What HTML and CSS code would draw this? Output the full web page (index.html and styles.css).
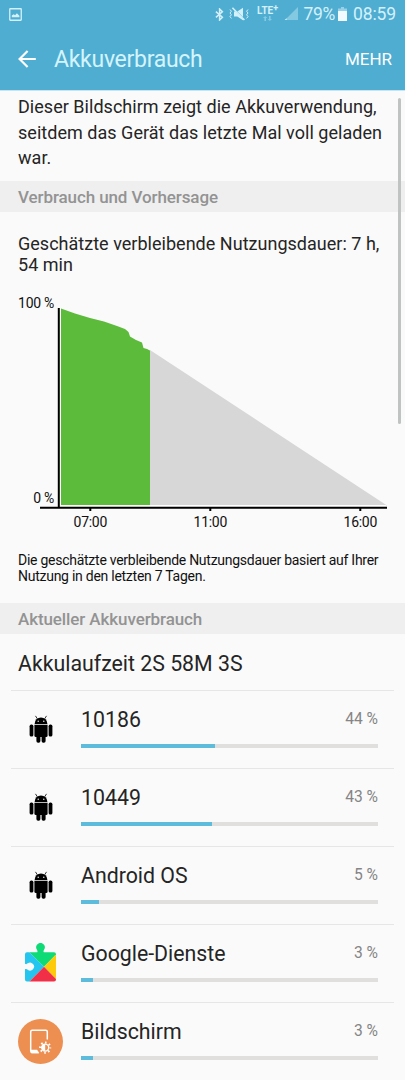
FILE: index.html
```html
<!DOCTYPE html>
<html lang="de">
<head>
  <meta charset="UTF-8" />
  <meta name="viewport" content="width=device-width, initial-scale=1.0"/>
  <title>Akkuverbrauch</title>
  <link rel="stylesheet" href="styles.css">
</head>
<body>
  <svg class="defs" width="0" height="0">
    <symbol id="android" viewBox="0 0 24 28">
      <path d="M5.6 8.9a6.4 6.4 0 0 1 12.8 0z"/>
      <path d="M8.2 3.6 6.7 1.2M15.8 3.6l1.5-2.4" stroke="#000" stroke-width=".8" stroke-linecap="round"/>
      <circle cx="9.2" cy="6.2" r=".7" fill="#fafafa"/>
      <circle cx="14.8" cy="6.2" r=".7" fill="#fafafa"/>
      <path d="M5.4 9.8h13.2v10.7a1.5 1.5 0 0 1-1.5 1.5H6.9a1.5 1.5 0 0 1-1.5-1.5z"/>
      <rect x=".6" y="9.6" width="3.8" height="12" rx="1.7"/>
      <rect x="19.6" y="9.6" width="3.8" height="12" rx="1.7"/>
      <rect x="7.4" y="19" width="4" height="8.8" rx="1.7"/>
      <rect x="12.6" y="19" width="4" height="8.8" rx="1.7"/>
    </symbol>
  </svg>

  <header>
    <div class="statusbar">
      <svg class="picture" width="13" height="13" viewBox="0 0 13 13">
        <rect x=".75" y=".75" width="11.5" height="11.5" rx=".5" fill="none" stroke="#d4f1fb" stroke-width="1.3"/>
        <path d="M2.8 9.2V7.6l1.9-1.4 1.4 1 1.8-2 2.5 2.6v1.4z" fill="#d4f1fb"/>
      </svg>
      <svg width="9" height="13" viewBox="0 0 9 13" fill="none" stroke="#d4f1fb" stroke-width="1.5">
        <path d="M.9 3.6 7.4 9.3 4.6 12V1l2.8 2.7L.9 9.4"/>
      </svg>
      <svg class="mute" width="21" height="14" viewBox="0 0 21 14">
        <path d="M5 4.5h3.3L14 .8v12.4L8.3 9.5H5z" fill="#d4f1fb"/>
        <path d="M4.2 1.2l12 12" stroke="#4fadd1" stroke-width="1.4"/>
        <path d="M3.4 .8l12 12.2" stroke="#d4f1fb" stroke-width="1.6"/>
        <path d="M1 2.5l1.4 1.7L1 6l1.4 1.8L1 9.6l1.4 1.8M19 2.5l-1.4 1.7L19 6l-1.4 1.8L19 9.6l-1.4 1.8" fill="none" stroke="#d4f1fb" stroke-width="1"/>
      </svg>
      <div class="lte">
        <span>LTE<sup>+</sup></span>
        <svg width="9" height="5" viewBox="0 0 9 5" fill="#83cae4">
          <path d="M0 2 2.2 0l2.2 2H3v3H1.4V2zM4.6 3H6V0h1.6v3H9L6.8 5z"/>
        </svg>
      </div>
      <svg class="signal" width="15" height="14" viewBox="0 0 15 14">
        <path d="M14 0v13H1z" fill="#83c9e2"/>
        <path d="M2.6 11.2V13H.6z" fill="#d4f1fb"/>
      </svg>
      <span class="level">79%</span>
      <svg class="battery" width="9" height="14" viewBox="0 0 9 14">
        <path d="M3 0h3v1.5h3V14H0V1.5h3z" fill="#95d2e9"/>
        <path d="M0 4h9v10H0z" fill="#f1fbff"/>
      </svg>
      <span class="time">08:59</span>
    </div>
    <div class="appbar">
      <svg width="18" height="18" viewBox="0 0 18 18" fill="none" stroke="#fff" stroke-width="2.2">
        <path d="M17.8 9H1.8M9.6 1 1.6 9l8 8"/>
      </svg>
      <h1>Akkuverbrauch</h1>
      <button>MEHR</button>
    </div>
  </header>

  <main>
    <p class="intro">Dieser Bildschirm zeigt die Akkuverwendung,<br>seitdem das Gerät das letzte Mal voll geladen<br>war.</p>

    <h2>Verbrauch und Vorhersage</h2>
    <p class="estimate">Geschätzte verbleibende Nutzungsdauer: 7 h,<br>54 min</p>

    <svg class="chart" width="405" height="250" viewBox="0 285 405 250">
      <path class="forecast" d="M150 350 387 505.5H150z"/>
      <path class="used" d="M61 308.5 75 313.5 90 318 104 321.5 117 326 125 329 128.5 332 130 336.5 136 340 142 342.5 143.5 348 147 349 150 350.5V505H61z"/>
      <path class="plot-edge" d="M60.5 308V505.5H386"/>
      <path class="axis" d="M58.8 308V507M40 507.7H387M90.3 508V511M210.3 508V511M360.3 508V511"/>
      <text x="54" y="308" text-anchor="end">100 %</text>
      <text x="54" y="503" text-anchor="end">0 %</text>
      <text x="90.3" y="527" text-anchor="middle">07:00</text>
      <text x="210.3" y="527" text-anchor="middle">11:00</text>
      <text x="360.3" y="527" text-anchor="middle">16:00</text>
    </svg>
    <p class="note">Die geschätzte verbleibende Nutzungsdauer basiert auf Ihrer<br>Nutzung in den letzten 7 Tagen.</p>

    <h2>Aktueller Akkuverbrauch</h2>
    <p class="runtime">Akkulaufzeit 2S 58M 3S</p>

    <ul class="apps">
      <li>
        <div class="icon"><svg class="robot" width="24" height="28"><use href="#android"/></svg></div>
        <div class="info">
          <div class="label"><span>10186</span><em>44 %</em></div>
          <div class="bar"><div style="width: 45.1%"></div></div>
        </div>
      </li>
      <li>
        <div class="icon"><svg class="robot" width="24" height="28"><use href="#android"/></svg></div>
        <div class="info">
          <div class="label"><span>10449</span><em>43 %</em></div>
          <div class="bar"><div style="width: 44.1%"></div></div>
        </div>
      </li>
      <li>
        <div class="icon"><svg class="robot" width="24" height="28"><use href="#android"/></svg></div>
        <div class="info">
          <div class="label"><span>Android OS</span><em>5 %</em></div>
          <div class="bar"><div style="width: 6.1%"></div></div>
        </div>
      </li>
      <li>
        <div class="icon">
          <svg class="puzzle" width="31" height="40" viewBox="0 0 31 40">
            <clipPath id="piece">
              <path d="M2 10.2h10.2c.6-1 .2-1.7-.4-2.7a4.3 4.3 0 1 1 7.4 0c-.6 1-1 1.7-.4 2.7H29a2 2 0 0 1 2 2V37.5a2 2 0 0 1-2 2H2a2 2 0 0 1-2-2V27.3c1.2-.7 1.8-.2 2.7.5a4 4 0 1 0 0-6.5c-.9.7-1.5 1.2-2.7.5V12.2a2 2 0 0 1 2-2z"/>
            </clipPath>
            <g clip-path="url(#piece)">
              <path d="M0 0h31v12.5L19 24.8 4 10z" fill="#0edb75"/>
              <path d="M0 6 19 24.8 4 40H0z" fill="#24c5ef"/>
              <path d="M31 12.5v24.5L19 24.8z" fill="#fdcb0c"/>
              <path d="M19 24.8 34 40H4z" fill="#f13048"/>
            </g>
          </svg>
        </div>
        <div class="info">
          <div class="label"><span>Google-Dienste</span><em>3 %</em></div>
          <div class="bar"><div style="width: 4.1%"></div></div>
        </div>
      </li>
      <li>
        <div class="icon">
          <svg width="45" height="45" viewBox="0 0 45 45">
            <circle cx="22.5" cy="22.5" r="22.5" fill="#ec8f51"/>
            <path d="M29.3 20.5V12.8a1.5 1.5 0 0 0-1.5-1.5H14.2a1.5 1.5 0 0 0-1.5 1.5V32a1.5 1.5 0 0 0 1.5 1.5h6.5" fill="none" stroke="#fff" stroke-width="1.5"/>
            <path d="M13 30.8h6.2l1.8 3.4h-8z" fill="#fff"/>
            <circle cx="27.2" cy="28.6" r="5.1" fill="none" stroke="#fff" stroke-width="2" stroke-dasharray="1.6 2.405" stroke-dashoffset=".8"/>
            <circle cx="27.2" cy="28.6" r="3.5" fill="none" stroke="#fff" stroke-width="1.4"/>
            <path d="M27.2 25.1a3.5 3.5 0 0 0 0 7z" fill="#fff"/>
          </svg>
        </div>
        <div class="info">
          <div class="label"><span>Bildschirm</span><em>3 %</em></div>
          <div class="bar"><div style="width: 4.1%"></div></div>
        </div>
      </li>
    </ul>
  </main>
  <div class="scrollbar"></div>
</body>
</html>
```

FILE: styles.css
```css
:root {
  --bg: #fafafa;
  --text: #252525;
  --primary: #4fadd1;
  --bar: #5dbbdb;
  --track: #e0dfde;
}
* {
  box-sizing: border-box;
}
body {
  font-family: Roboto, "Liberation Sans", sans-serif;
  margin: 0;
  height: 1080px;
  overflow: hidden;
  position: relative;
  background: var(--bg);
  color: var(--text);
}
.defs {
  position: absolute;
}
header {
  height: 91px;
  background: var(--primary);
  border-bottom: 1px solid #c5e4f4;
}
.statusbar {
  height: 28px;
  padding: 0 9px;
  display: flex;
  align-items: center;
  color: #d4f1fb;
  font-size: 17.5px;
}
.picture {
  margin-right: auto;
}
.mute {
  margin-left: 5px;
}
.lte {
  width: 22px;
  height: 18px;
  margin-left: 7px;
  font-size: 10px;
  font-weight: 700;
  line-height: 11px;
  display: flex;
  flex-direction: column;
  align-items: center;
  white-space: nowrap;
}
.lte sup {
  font-size: 9px;
  line-height: 0;
  vertical-align: 3px;
}
.signal {
  margin-left: 5px;
}
.level {
  margin-left: 5px;
  letter-spacing: -0.4px;
}
.battery {
  margin: 0 6px 0 3px;
}
.time {
  letter-spacing: -0.1px;
}
.appbar {
  height: 62px;
  padding: 0 13px 0 18px;
  display: flex;
  align-items: center;
}
h1 {
  margin: 0 auto 0 18px;
  font-size: 23px;
  font-weight: 400;
  letter-spacing: -0.28px;
  color: #d4f4fd;
}
button {
  padding: 0;
  border: none;
  background: none;
  font: 400 17px Roboto, sans-serif;
  color: #fff;
}
p {
  margin: 0;
  padding: 0 18px;
  white-space: nowrap;
}
.intro {
  height: 90px;
  padding-top: 3px;
  font-size: 18px;
  letter-spacing: 0.03px;
  line-height: 25.5px;
}
h2 {
  margin: 0;
  height: 31px;
  padding: 0 18px;
  background: #efefef;
  color: #939393;
  font-size: 17px;
  font-weight: 500;
  letter-spacing: -0.1px;
  line-height: 33px;
}
.estimate {
  height: 73px;
  padding-top: 21px;
  font-size: 18px;
  letter-spacing: 0.02px;
  line-height: 21px;
}
.chart {
  display: block;
}
.chart text {
  font-size: 14px;
  letter-spacing: -0.28px;
  fill: #111;
}
.forecast {
  fill: #d7d7d7;
}
.used {
  fill: #5dbb3c;
}
.plot-edge {
  fill: none;
  stroke: #fff;
}
.axis {
  fill: none;
  stroke: #000;
  stroke-width: 2;
}
.note {
  height: 68px;
  padding-top: 17px;
  font-size: 14px;
  letter-spacing: -0.26px;
  line-height: 16px;
  color: #111;
}
.runtime {
  height: 56px;
  font-size: 21.3px;
  line-height: 60px;
}
.apps {
  margin: 0;
  padding: 0 11px;
  list-style: none;
}
.apps li {
  height: 78px;
  padding: 0 16px 0 7px;
  border-top: 1px solid #e6e6e6;
  display: flex;
}
.icon {
  width: 45px;
  height: 77px;
  margin-right: 18px;
  display: flex;
  align-items: center;
  justify-content: center;
}
.robot {
  margin-bottom: 2px;
}
.puzzle {
  margin: 0 1px 3px 0;
}
.info {
  flex: 1;
}
.label {
  height: 53px;
  display: flex;
  justify-content: space-between;
  font-size: 21.3px;
  line-height: 58px;
}
.label em {
  font-size: 15.6px;
  line-height: 56px;
  font-style: normal;
  color: #858585;
}
.bar {
  height: 4px;
  background: var(--track);
}
.bar div {
  height: 4px;
  background: var(--bar);
}
.scrollbar {
  position: absolute;
  top: 98px;
  left: 398px;
  width: 3px;
  height: 326px;
  border-radius: 2px;
  background: #bfc4c3;
}
```
